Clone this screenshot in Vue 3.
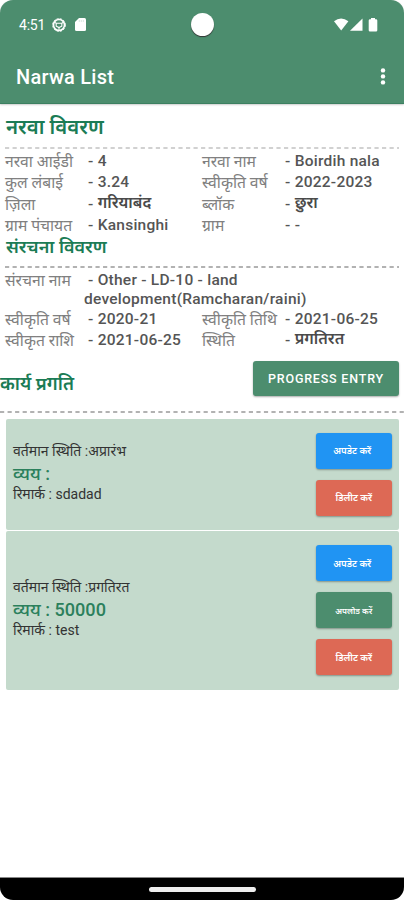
<script setup>
const details = [
  ['नरवा आईडी', '4', 'नरवा नाम', 'Boirdih nala'],
  ['कुल लंबाई', '3.24', 'स्वीकृति वर्ष', '2022-2023'],
  ['ज़िला', 'गरियाबंद', 'ब्लॉक', 'छुरा'],
  ['ग्राम पंचायत', 'Kansinghi', 'ग्राम', '-'],
]
const structure = [
  ['स्वीकृति वर्ष', '2020-21', 'स्वीकृति तिथि', '2021-06-25'],
  ['स्वीकृत राशि', '2021-06-25', 'स्थिति', 'प्रगतिरत'],
]
const update = { label: 'अपडेट करें', kind: 'blue' }
const upload = { label: 'अपलोड करें', kind: 'green' }
const remove = { label: 'डिलीट करें', kind: 'red' }
const entries = [
  { status: 'अप्रारंभ', cost: '', remark: 'sdadad', actions: [update, remove] },
  { status: 'प्रगतिरत', cost: '50000', remark: 'test', actions: [update, upload, remove] },
]
const isHindi = (text) => /[\u0900-\u097f]/.test(text)
</script>

<template>
  <div class="phone">
    <header>
      <div class="status">
        <span class="time">4:51</span>
        <svg class="globe" viewBox="0 0 14 14" width="14" height="14">
          <circle cx="7" cy="7" r="5.5" fill="none" stroke="#fff" stroke-width="1.6" />
          <circle cx="7" cy="7" r="6.4" fill="none" stroke="#fff" stroke-width=".9" stroke-dasharray="2.200 1.15" />
          <path d="M4 5.200h6M4.200 5.200v3l2.800 1.400 2.800-1.400v-3M7 9v3M4.200 5.200L2.500 4.200M9.800 5.200l1.700-1" fill="none" stroke="#fff" stroke-width="1.100" />
        </svg>
        <svg class="sd" viewBox="0 0 11 13" width="11" height="13">
          <path d="M4 0h5.5Q11 0 11 1.5v10Q11 13 9.500 13h-8Q0 13 0 11.500V4z" fill="#fff" />
          <path d="M4.300 2v2M6.300 2v2M8.300 2v2" stroke="#cfe1d8" stroke-width=".8" />
        </svg>
        <span class="camera"></span>
        <svg class="signals" viewBox="0 0 44 14" width="44" height="14">
          <path d="M0 3.300Q7-2.300 14.400 3.300L7.200 12.500z" fill="#fff" />
          <path d="M28.500 .5v12.300H16z" fill="#fff" />
          <path d="M37 1.300V0h4v1.300h1q1.300 0 1.300 1.300v9.600q0 1.300-1.300 1.300h-6q-1.300 0-1.300-1.300V2.600q0-1.300 1.300-1.300z" fill="#fff" />
        </svg>
      </div>
      <div class="bar">
        <h1>Narwa List</h1>
        <svg viewBox="0 0 6 18" width="6" height="18">
          <circle v-for="y in [2.4, 8.4, 14.4]" :key="y" cx="3" :cy="y" r="2.2" fill="#fff" />
        </svg>
      </div>
    </header>

    <main>
      <h2 class="first">नरवा विवरण</h2>
      <svg class="rule light" height="2" width="394"><line x1="0" y1="1" x2="394" y2="1" /></svg>
      <div class="grid">
        <div v-for="row in details" :key="row[0]" class="row">
          <span>{{ row[0] }}</span><b>- <i :class="{ hindi: isHindi(row[1]) }">{{ row[1] }}</i></b>
          <span>{{ row[2] }}</span><b>- <i :class="{ hindi: isHindi(row[3]) }">{{ row[3] }}</i></b>
        </div>
      </div>
      <h2 class="second">संरचना विवरण</h2>
      <svg class="rule" height="2" width="394"><line x1="0" y1="1" x2="394" y2="1" /></svg>
      <div class="grid lower">
        <div class="long">
          <span>संरचना नाम</span>
          <b>- Other - LD-10 - land<br />development(Ramcharan/raini)</b>
        </div>
        <div v-for="row in structure" :key="row[0]" class="row">
          <span>{{ row[0] }}</span><b>- <i :class="{ hindi: isHindi(row[1]) }">{{ row[1] }}</i></b>
          <span>{{ row[2] }}</span><b>- <i :class="{ hindi: isHindi(row[3]) }">{{ row[3] }}</i></b>
        </div>
      </div>
      <div class="progress">
        <h2>कार्य प्रगति</h2>
        <button>PROGRESS ENTRY</button>
      </div>
      <svg class="rule wide" height="2" width="404"><line x1="0" y1="1" x2="404" y2="1" /></svg>
      <section v-for="entry in entries" :key="entry.remark" class="card">
        <div class="info">
          <p>वर्तमान स्थिति :{{ entry.status }}</p>
          <p class="cost">व्यय : {{ entry.cost }}</p>
          <p>रिमार्क : {{ entry.remark }}</p>
        </div>
        <div class="actions">
          <button v-for="a in entry.actions" :key="a.kind" :class="a.kind">{{ a.label }}</button>
        </div>
      </section>
    </main>
    <footer><span></span></footer>
  </div>
</template>

<style>
body { margin: 0; background: #fff; }
</style>

<style scoped>
* { box-sizing: border-box; }
.phone { width: 404px; height: 900px; display: flex; flex-direction: column; background: #fff; overflow: hidden; font-family: Roboto, "Noto Sans", sans-serif; color: #555; }
header { height: 104px; flex: none; background: #4c8d6e; border-radius: 13px 13px 0 0; color: #fff; border-bottom: 1px solid #3c8061; box-shadow: 0 1px 2px #0003; }
.status { height: 49px; display: flex; align-items: center; padding-left: 19px; }
.time { width: 33px; font-size: 14px; letter-spacing: -.2px; }
.sd { margin-left: 9px; }
.camera { width: 23px; height: 23px; margin-left: 105px; border-radius: 50%; background: #fff; box-shadow: 0 1px 1px #333; }
.signals { margin-left: 120px; }
.bar { height: 55px; display: flex; justify-content: space-between; padding: 0 18px 0 16px; align-items: center; }
h1 { margin: 0; font-size: 20px; font-weight: 500; letter-spacing: .25px; }
main { flex: 1; }
h2 { margin: 0; font-size: 20.4px; line-height: 24px; font-weight: 600; color: #1b7c55; white-space: nowrap; }
.first { padding: 11px 0 0 6px; }
.rule { display: block; margin: 8px 0 0 5px; stroke: #999; stroke-width: 1.3; stroke-dasharray: 4.2 3.34; }
.rule.light { stroke: #c2c2c2; }
.rule.wide { margin: 15px 0 0; }
.grid { padding: 2px 0 0 5px; font-size: 15.5px; }
.row { display: grid; grid-template-columns: 83px 114px 83px 1fr; height: 21.4px; line-height: 21.4px; white-space: nowrap; }
.grid b { font-weight: 500; letter-spacing: .25px; white-space: nowrap; }
.grid i { font-style: normal; }
.grid .hindi { font-size: 16px; line-height: 1; font-weight: 600; letter-spacing: 0; color: #4a4a4a; vertical-align: 1px; }
.grid span { color: #808080; font-size: 15.7px; }
h2.second { padding-left: 6px; font-size: 18px; line-height: 22px; margin-top: -1px; }
.second + .rule { margin-top: 8px; }
.lower { padding-top: 1px; }
.long { display: flex; line-height: 19px; height: 40px; padding-top: 2px; }
.long span { width: 79px; }
.long b::first-letter { margin-left: 4px; }
.progress { display: flex; justify-content: space-between; padding: 10px 5px 0 0; }
.progress h2 { padding-top: 11px; font-size: 18.4px; }
button { border: 0; border-radius: 3px; color: #fff; font-family: inherit; font-weight: 500; background: #4c8d6e; box-shadow: 0 1px 2px #0005; padding: 0; white-space: nowrap; }
.progress button { width: 146px; height: 35px; font-size: 12.5px; letter-spacing: .8px; }
.card { margin: 6px 5px 0 6px; padding: 0 7.500px 0 7px; background: #c4dacc; border-radius: 2px; display: flex; justify-content: space-between; align-items: center; height: 111px; }
.card + .card { margin-top: 1px; height: 159px; }
.info { padding-bottom: 3px; }
p { margin: 0; font-size: 14px; line-height: 21.5px; color: #333; white-space: nowrap; }
.cost { font-size: 18.1px; font-weight: 500; color: #2b805c; }
.actions { display: flex; flex-direction: column; gap: 11px; padding-bottom: 1px; }
.actions button { width: 75.500px; height: 36px; font-size: 9.5px; font-weight: 600; }
.actions .blue { background: #2094f3; padding-right: 3px; }
.actions .red { background: #dd6955; }
.actions .green { font-size: 8.3px; }
footer { height: 23px; background: #000; border-radius: 0 0 13px 13px; border-top: 1px solid #888; display: flex; justify-content: center; padding-top: 9px; }
footer span { width: 107px; height: 5px; border-radius: 3px; background: #eee; }
</style>
